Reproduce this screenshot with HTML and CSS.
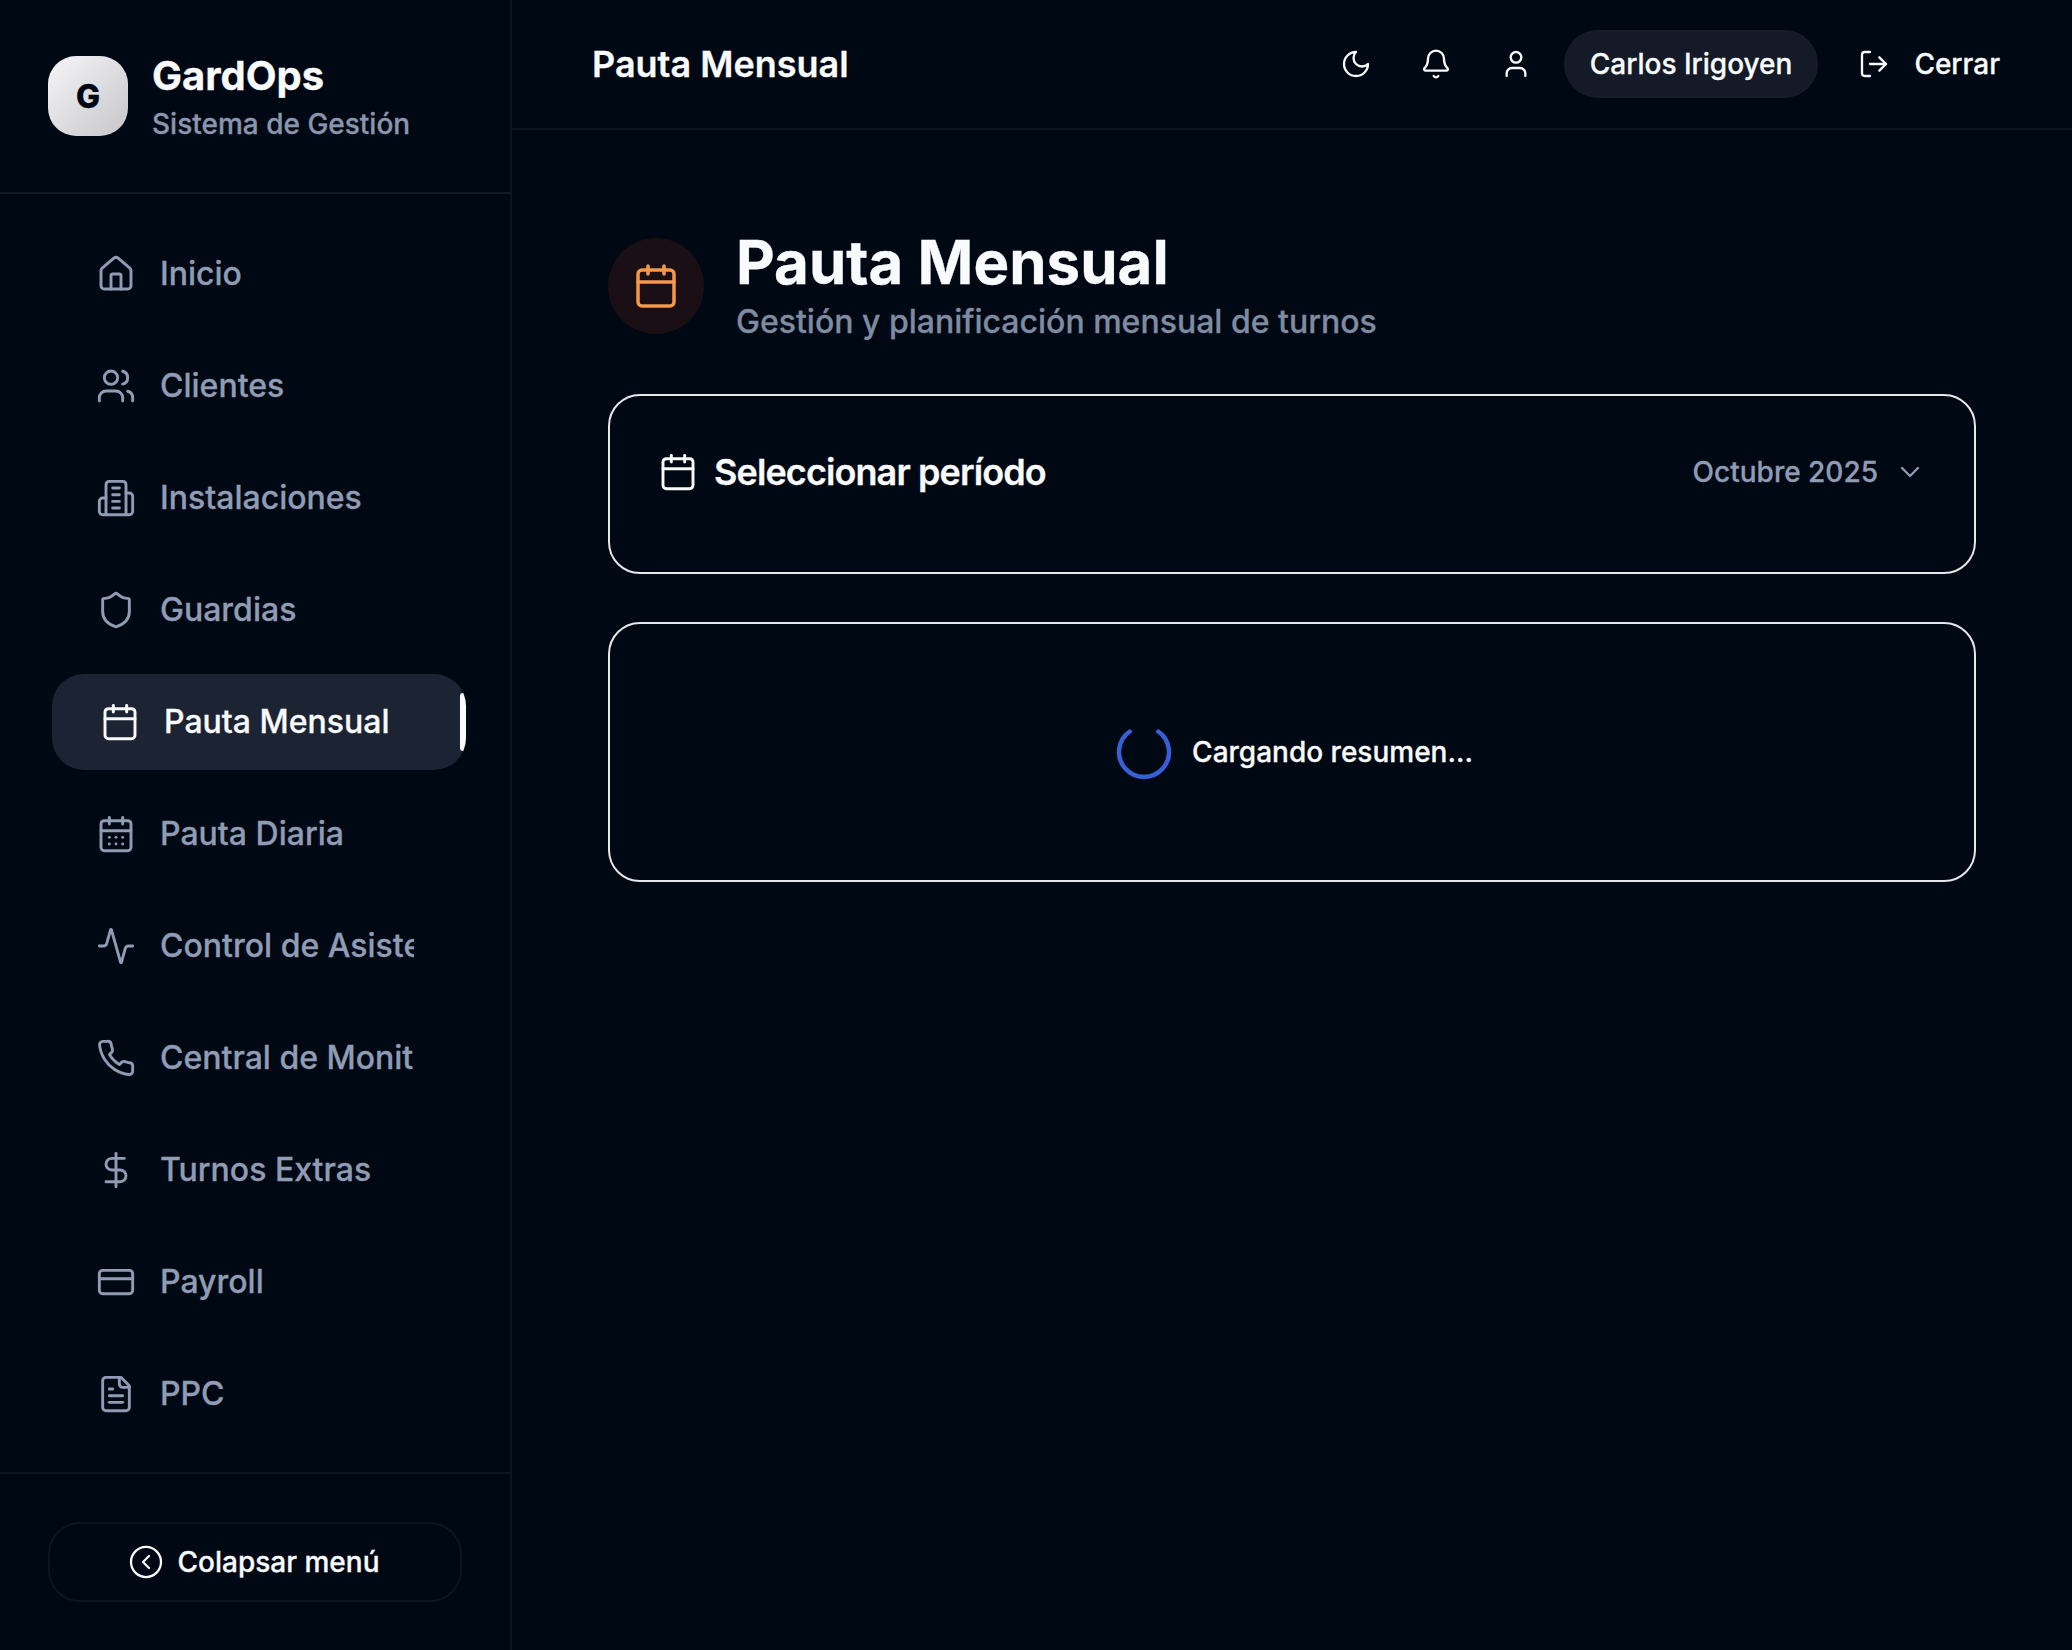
FILE: index.html
```html
<!DOCTYPE html>
<html lang="es">
  <head>
    <meta charset="UTF-8" />
    <meta name="viewport" content="width=device-width, initial-scale=1.0" />
    <title>GardOps - Pauta Mensual</title>
    <link rel="stylesheet" href="styles.css">
  </head>
  <body>
    <svg class="sprites" aria-hidden="true">
      <symbol id="i-home" viewBox="0 0 24 24"><path d="M15 21v-8a1 1 0 0 0-1-1h-4a1 1 0 0 0-1 1v8"/><path d="M3 10a2 2 0 0 1 .709-1.528l7-5.999a2 2 0 0 1 2.582 0l7 5.999A2 2 0 0 1 21 10v9a2 2 0 0 1-2 2H5a2 2 0 0 1-2-2z"/></symbol>
      <symbol id="i-users" viewBox="0 0 24 24"><path d="M16 21v-2a4 4 0 0 0-4-4H6a4 4 0 0 0-4 4v2"/><path d="M16 3.128a4 4 0 0 1 0 7.744"/><path d="M22 21v-2a4 4 0 0 0-3-3.87"/><circle cx="9" cy="7" r="4"/></symbol>
      <symbol id="i-building" viewBox="0 0 24 24"><path d="M6 22V4a2 2 0 0 1 2-2h8a2 2 0 0 1 2 2v18Z"/><path d="M6 12H4a2 2 0 0 0-2 2v6a2 2 0 0 0 2 2h2"/><path d="M18 9h2a2 2 0 0 1 2 2v9a2 2 0 0 1-2 2h-2"/><path d="M10 6h4"/><path d="M10 10h4"/><path d="M10 14h4"/><path d="M10 18h4"/></symbol>
      <symbol id="i-shield" viewBox="0 0 24 24"><path d="M20 13c0 5-3.5 7.5-7.66 8.95a1 1 0 0 1-.67-.01C7.5 20.5 4 18 4 13V6a1 1 0 0 1 1-1c2 0 4.5-1.2 6.24-2.72a1.17 1.17 0 0 1 1.52 0C14.51 3.81 17 5 19 5a1 1 0 0 1 1 1z"/></symbol>
      <symbol id="i-calendar" viewBox="0 0 24 24"><path d="M8 2v4"/><path d="M16 2v4"/><rect width="18" height="18" x="3" y="4" rx="2"/><path d="M3 10h18"/></symbol>
      <symbol id="i-calendar-days" viewBox="0 0 24 24"><path d="M8 2v4"/><path d="M16 2v4"/><rect width="18" height="18" x="3" y="4" rx="2"/><path d="M3 10h18"/><path d="M8 14h.01"/><path d="M12 14h.01"/><path d="M16 14h.01"/><path d="M8 18h.01"/><path d="M12 18h.01"/><path d="M16 18h.01"/></symbol>
      <symbol id="i-activity" viewBox="0 0 24 24"><path d="M22 12h-2.48a2 2 0 0 0-1.93 1.46l-2.35 8.36a.25.25 0 0 1-.48 0L9.24 2.18a.25.25 0 0 0-.48 0l-2.35 8.36A2 2 0 0 1 4.49 12H2"/></symbol>
      <symbol id="i-phone" viewBox="0 0 24 24"><path d="M22 16.92v3a2 2 0 0 1-2.18 2 19.79 19.79 0 0 1-8.63-3.07 19.5 19.5 0 0 1-6-6 19.79 19.79 0 0 1-3.07-8.67A2 2 0 0 1 4.11 2h3a2 2 0 0 1 2 1.72 12.84 12.84 0 0 0 .7 2.81 2 2 0 0 1-.45 2.11L8.09 9.91a16 16 0 0 0 6 6l1.27-1.27a2 2 0 0 1 2.11-.45 12.84 12.84 0 0 0 2.81.7A2 2 0 0 1 22 16.92z"/></symbol>
      <symbol id="i-dollar" viewBox="0 0 24 24"><line x1="12" x2="12" y1="2" y2="22"/><path d="M17 5H9.5a3.5 3.5 0 0 0 0 7h5a3.5 3.5 0 0 1 0 7H6"/></symbol>
      <symbol id="i-card" viewBox="0 0 24 24"><rect width="20" height="14" x="2" y="5" rx="2"/><line x1="2" x2="22" y1="10" y2="10"/></symbol>
      <symbol id="i-file" viewBox="0 0 24 24"><path d="M15 2H6a2 2 0 0 0-2 2v16a2 2 0 0 0 2 2h12a2 2 0 0 0 2-2V7Z"/><path d="M14 2v4a2 2 0 0 0 2 2h4"/><path d="M10 9H8"/><path d="M16 13H8"/><path d="M16 17H8"/></symbol>
      <symbol id="i-circle-left" viewBox="0 0 24 24"><circle cx="12" cy="12" r="10"/><path d="m14 16-4-4 4-4"/></symbol>
      <symbol id="i-moon" viewBox="0 0 24 24"><path d="M12 3a6 6 0 0 0 9 9 9 9 0 1 1-9-9Z"/></symbol>
      <symbol id="i-bell" viewBox="0 0 24 24"><path d="M10.268 21a2 2 0 0 0 3.464 0"/><path d="M3.262 15.326A1 1 0 0 0 4 17h16a1 1 0 0 0 .74-1.673C19.41 13.956 18 12.499 18 8A6 6 0 0 0 6 8c0 4.499-1.411 5.956-2.738 7.326"/></symbol>
      <symbol id="i-user" viewBox="0 0 24 24"><path d="M19 21v-2a4 4 0 0 0-4-4H9a4 4 0 0 0-4 4v2"/><circle cx="12" cy="7" r="4"/></symbol>
      <symbol id="i-logout" viewBox="0 0 24 24"><path d="M9 21H5a2 2 0 0 1-2-2V5a2 2 0 0 1 2-2h4"/><polyline points="16 17 21 12 16 7"/><line x1="21" x2="9" y1="12" y2="12"/></symbol>
      <symbol id="i-chevron" viewBox="0 0 24 24"><path d="m6 9 6 6 6-6"/></symbol>
    </svg>

    <aside class="sidebar">
      <div class="brand">
        <div class="brand-logo">G</div>
        <div class="brand-text">
          <div class="brand-name">GardOps</div>
          <div class="brand-sub">Sistema de Gestión</div>
        </div>
      </div>

      <nav class="nav">
        <a class="nav-item"><svg class="icon"><use href="#i-home"/></svg><span>Inicio</span></a>
        <a class="nav-item"><svg class="icon"><use href="#i-users"/></svg><span>Clientes</span></a>
        <a class="nav-item"><svg class="icon"><use href="#i-building"/></svg><span>Instalaciones</span></a>
        <a class="nav-item"><svg class="icon"><use href="#i-shield"/></svg><span>Guardias</span></a>
        <a class="nav-item active"><svg class="icon"><use href="#i-calendar"/></svg><span>Pauta Mensual</span></a>
        <a class="nav-item"><svg class="icon"><use href="#i-calendar-days"/></svg><span>Pauta Diaria</span></a>
        <a class="nav-item"><svg class="icon"><use href="#i-activity"/></svg><span>Control de Asistencia</span></a>
        <a class="nav-item"><svg class="icon"><use href="#i-phone"/></svg><span>Central de Monitoreo</span></a>
        <a class="nav-item"><svg class="icon"><use href="#i-dollar"/></svg><span>Turnos Extras</span></a>
        <a class="nav-item"><svg class="icon"><use href="#i-card"/></svg><span>Payroll</span></a>
        <a class="nav-item"><svg class="icon"><use href="#i-file"/></svg><span>PPC</span></a>
      </nav>

      <div class="sidebar-foot">
        <button class="collapse-btn"><svg class="icon-md"><use href="#i-circle-left"/></svg>Colapsar menú</button>
      </div>
    </aside>

    <div class="main">
      <header class="topbar">
        <div class="topbar-title">Pauta Mensual</div>
        <div class="topbar-actions">
          <button class="icon-btn"><svg class="icon-sm"><use href="#i-moon"/></svg></button>
          <button class="icon-btn"><svg class="icon-sm"><use href="#i-bell"/></svg></button>
          <button class="icon-btn"><svg class="icon-sm"><use href="#i-user"/></svg></button>
          <div class="user-pill">Carlos Irigoyen</div>
          <button class="logout-btn"><svg class="icon-sm"><use href="#i-logout"/></svg>Cerrar</button>
        </div>
      </header>

      <main class="content">
        <div class="page-head">
          <div class="page-icon"><svg class="icon-lg"><use href="#i-calendar"/></svg></div>
          <div>
            <h1 class="page-title">Pauta Mensual</h1>
            <p class="page-sub">Gestión y planificación mensual de turnos</p>
          </div>
        </div>

        <section class="card card-period">
          <div class="period-row">
            <div class="period-label"><svg class="icon"><use href="#i-calendar"/></svg>Seleccionar período</div>
            <div class="period-select">Octubre 2025<svg class="icon-sm"><use href="#i-chevron"/></svg></div>
          </div>
        </section>

        <section class="card card-loading">
          <svg class="spinner" viewBox="0 0 56 56"><path d="M42.3 7.5A25 25 0 1 1 13.7 7.5"/></svg>
          <span class="loading-text">Cargando resumen...</span>
        </section>
      </main>
    </div>
  </body>
</html>
```

FILE: styles.css
```css
* {
  box-sizing: border-box;
}

body {
  margin: 0;
  height: 100vh;
  display: flex;
  background: #000813;
  color: #f8fafc;
  font-family: 'Inter', 'Noto Sans', sans-serif;
  -webkit-text-stroke: 0.3px currentColor; /* reference text renders a bit heavier */
  overflow: hidden;
}

.sprites {
  display: none;
}

.icon, .icon-sm, .icon-md, .icon-lg {
  fill: none;
  stroke: currentColor;
  stroke-width: 1.75;
  stroke-linecap: round;
  stroke-linejoin: round;
  flex-shrink: 0;
}
.icon { width: 40px; height: 40px; }
.icon-sm { width: 32px; height: 32px; }
.icon-md { width: 36px; height: 36px; stroke-width: 1.5; }
.icon-lg { width: 48px; height: 48px; }

button {
  background: none;
  border: none;
  color: inherit;
  font-family: inherit;
  padding: 0;
}

/* sidebar */
.sidebar {
  width: 512px;
  flex-shrink: 0;
  display: flex;
  flex-direction: column;
  border-right: 2px solid #0e1420;
}

.brand {
  height: 194px;
  display: flex;
  align-items: center;
  gap: 24px;
  padding: 0 48px;
  border-bottom: 2px solid #121927;
}

.brand-logo {
  width: 80px;
  height: 80px;
  border-radius: 28px;
  display: flex;
  align-items: center;
  justify-content: center;
  background: linear-gradient(135deg, #f6f6f8, #c6c6ca);
  color: #000813;
  font-size: 32px;
  font-weight: 800;
}

.brand-text {
  padding-top: 8px;
}

.brand-name {
  font-size: 40px;
  line-height: 48px;
  font-weight: 700;
}

.brand-sub {
  font-size: 28px;
  line-height: 48px;
  font-weight: 500;
  color: #8a96ad;
}

.nav {
  flex: 1;
  display: flex;
  flex-direction: column;
  gap: 16px;
  padding: 32px 48px 0;
}

.nav-item {
  position: relative;
  height: 96px;
  display: flex;
  align-items: center;
  gap: 24px;
  padding: 0 48px;
  border-radius: 32px;
  color: #8f9cb3;
  font-size: 32px;
  font-weight: 500;
  white-space: nowrap;
  overflow: hidden;
}

.nav-item span {
  overflow: hidden;
  padding-bottom: 2px;
}

.nav-item.active {
  background: #1c2333;
  color: #f8fafc;
  transform: translateX(4px);
}

.nav-item.active::after {
  content: "";
  position: absolute;
  top: 19px;
  right: 0;
  width: 6px;
  height: 58px;
  border-radius: 3px;
  background: #f8fafc;
}

.sidebar-foot {
  padding: 48px;
  border-top: 2px solid #0e1420;
}

.collapse-btn {
  width: 100%;
  height: 80px;
  display: flex;
  align-items: center;
  justify-content: center;
  gap: 14px;
  padding-right: 3px;
  border: 2px solid #0e1420;
  border-radius: 32px;
  font-size: 28px;
  font-weight: 500;
}

/* top bar */
.main {
  flex: 1;
  min-width: 0;
  display: flex;
  flex-direction: column;
}

.topbar {
  height: 130px;
  flex-shrink: 0;
  display: flex;
  align-items: center;
  justify-content: space-between;
  padding: 0 48px 0 80px;
  border-bottom: 2px solid #0e1420;
}

.topbar-title {
  font-size: 36px;
  font-weight: 600;
}

.topbar-actions {
  display: flex;
  align-items: center;
}

.icon-btn {
  width: 80px;
  height: 64px;
  display: flex;
  align-items: center;
  justify-content: center;
}

.user-pill {
  height: 68px;
  display: flex;
  align-items: center;
  margin-left: 8px;
  padding: 0 24px;
  border: 2px solid #161c2a;
  border-radius: 34px;
  background: #141a28;
  font-size: 28px;
  font-weight: 500;
}

.logout-btn {
  display: flex;
  align-items: center;
  gap: 24px;
  margin-left: 16px;
  padding: 0 24px;
  font-size: 28px;
  font-weight: 500;
}

/* page */
.content {
  flex: 1;
  display: flex;
  flex-direction: column;
  padding: 97px 96px 0;
}

.page-head {
  display: flex;
  align-items: center;
  gap: 32px;
  margin-bottom: 50px;
}

.page-icon {
  width: 96px;
  height: 96px;
  border-radius: 50%;
  display: flex;
  align-items: center;
  justify-content: center;
  background: #1a0f14;
  color: #f59849;
}

.page-title {
  margin: 0 0 2px;
  font-size: 60px;
  line-height: 70px;
  font-weight: 700;
}

.page-sub {
  margin: 0;
  font-size: 32px;
  line-height: 45px;
  font-weight: 500;
  color: #7f8ba0;
}

.card {
  border: 2px solid #e5e7eb;
  border-radius: 32px;
}

.card-period {
  height: 180px;
  padding: 50px 48px 0;
  margin-bottom: 48px;
}

.period-row {
  height: 52px;
  display: flex;
  align-items: center;
  justify-content: space-between;
}

.period-label {
  display: flex;
  align-items: center;
  gap: 16px;
  font-size: 36px;
  font-weight: 600;
  letter-spacing: -0.9px;
}

.period-select {
  display: flex;
  align-items: center;
  gap: 16px;
  font-size: 28px;
  font-weight: 500;
  color: #8f9cb3;
}

.card-loading {
  height: 260px;
  display: flex;
  align-items: center;
  justify-content: center;
  gap: 20px;
  padding-left: 5px;
}

.spinner {
  width: 56px;
  height: 56px;
  fill: none;
  stroke: #3560d8;
  stroke-width: 4.5;
  stroke-linecap: round;
}

.loading-text {
  font-size: 28px;
  font-weight: 500;
}
```
